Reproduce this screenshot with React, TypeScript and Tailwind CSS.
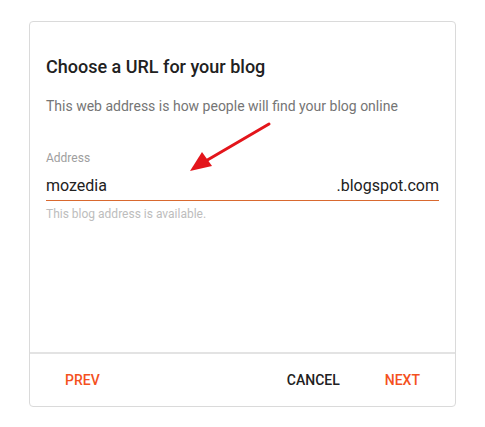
import React from 'react';

const RedArrow = () => (
  <svg
    className="absolute left-[180px] top-[118px]"
    width="95"
    height="60"
    viewBox="0 0 95 60"
  >
    <line x1="89" y1="6" x2="24" y2="44" stroke="#e3151b" strokeWidth="3" strokeLinecap="round" />
    <polygon points="10,53 22,34 32,48" fill="#e3151b" />
  </svg>
);

export default function App() {
  return (
    <div className="relative w-[485px] h-[427px] bg-white font-['Roboto',sans-serif]">
      <div className="absolute left-[29px] top-[21px] w-[427px] h-[386px] flex flex-col border border-[#dadada] rounded-[4px] bg-white">
        {/* Body */}
        <div className="flex-1 px-4 pt-[33px]">
          <h2 className="text-[18px] leading-6 font-medium text-[#212121]">Choose a URL for your blog</h2>
          <p className="mt-[17px] text-[14px] leading-5 text-[#757575]">
            This web address is how people will find your blog online
          </p>
          <div className="mt-[34px] text-[12px] leading-4 text-[#9e9e9e]">Address</div>
          <div className="mt-[8px] flex items-center justify-between border-b border-[#d9692f] pb-[2px]">
            <span className="text-[16px] leading-6 text-[#212121]">mozedia</span>
            <span className="text-[16px] leading-6 text-[#212121]">.blogspot.com</span>
          </div>
          <div className="mt-[5px] text-[12px] leading-4 text-[#bdbdbd]">This blog address is available.</div>
        </div>
        {/* Footer */}
        <div className="h-[54px] flex items-center border-t-2 border-[#e3e3e3] text-[14px] font-medium">
          <button className="ml-[35px] text-[#f4511e]">PREV</button>
          <div className="flex-1" />
          <button className="text-[#212121]">CANCEL</button>
          <button className="ml-[45px] mr-[35px] text-[#f4511e]">NEXT</button>
        </div>
      </div>
      <RedArrow />
    </div>
  );
}
